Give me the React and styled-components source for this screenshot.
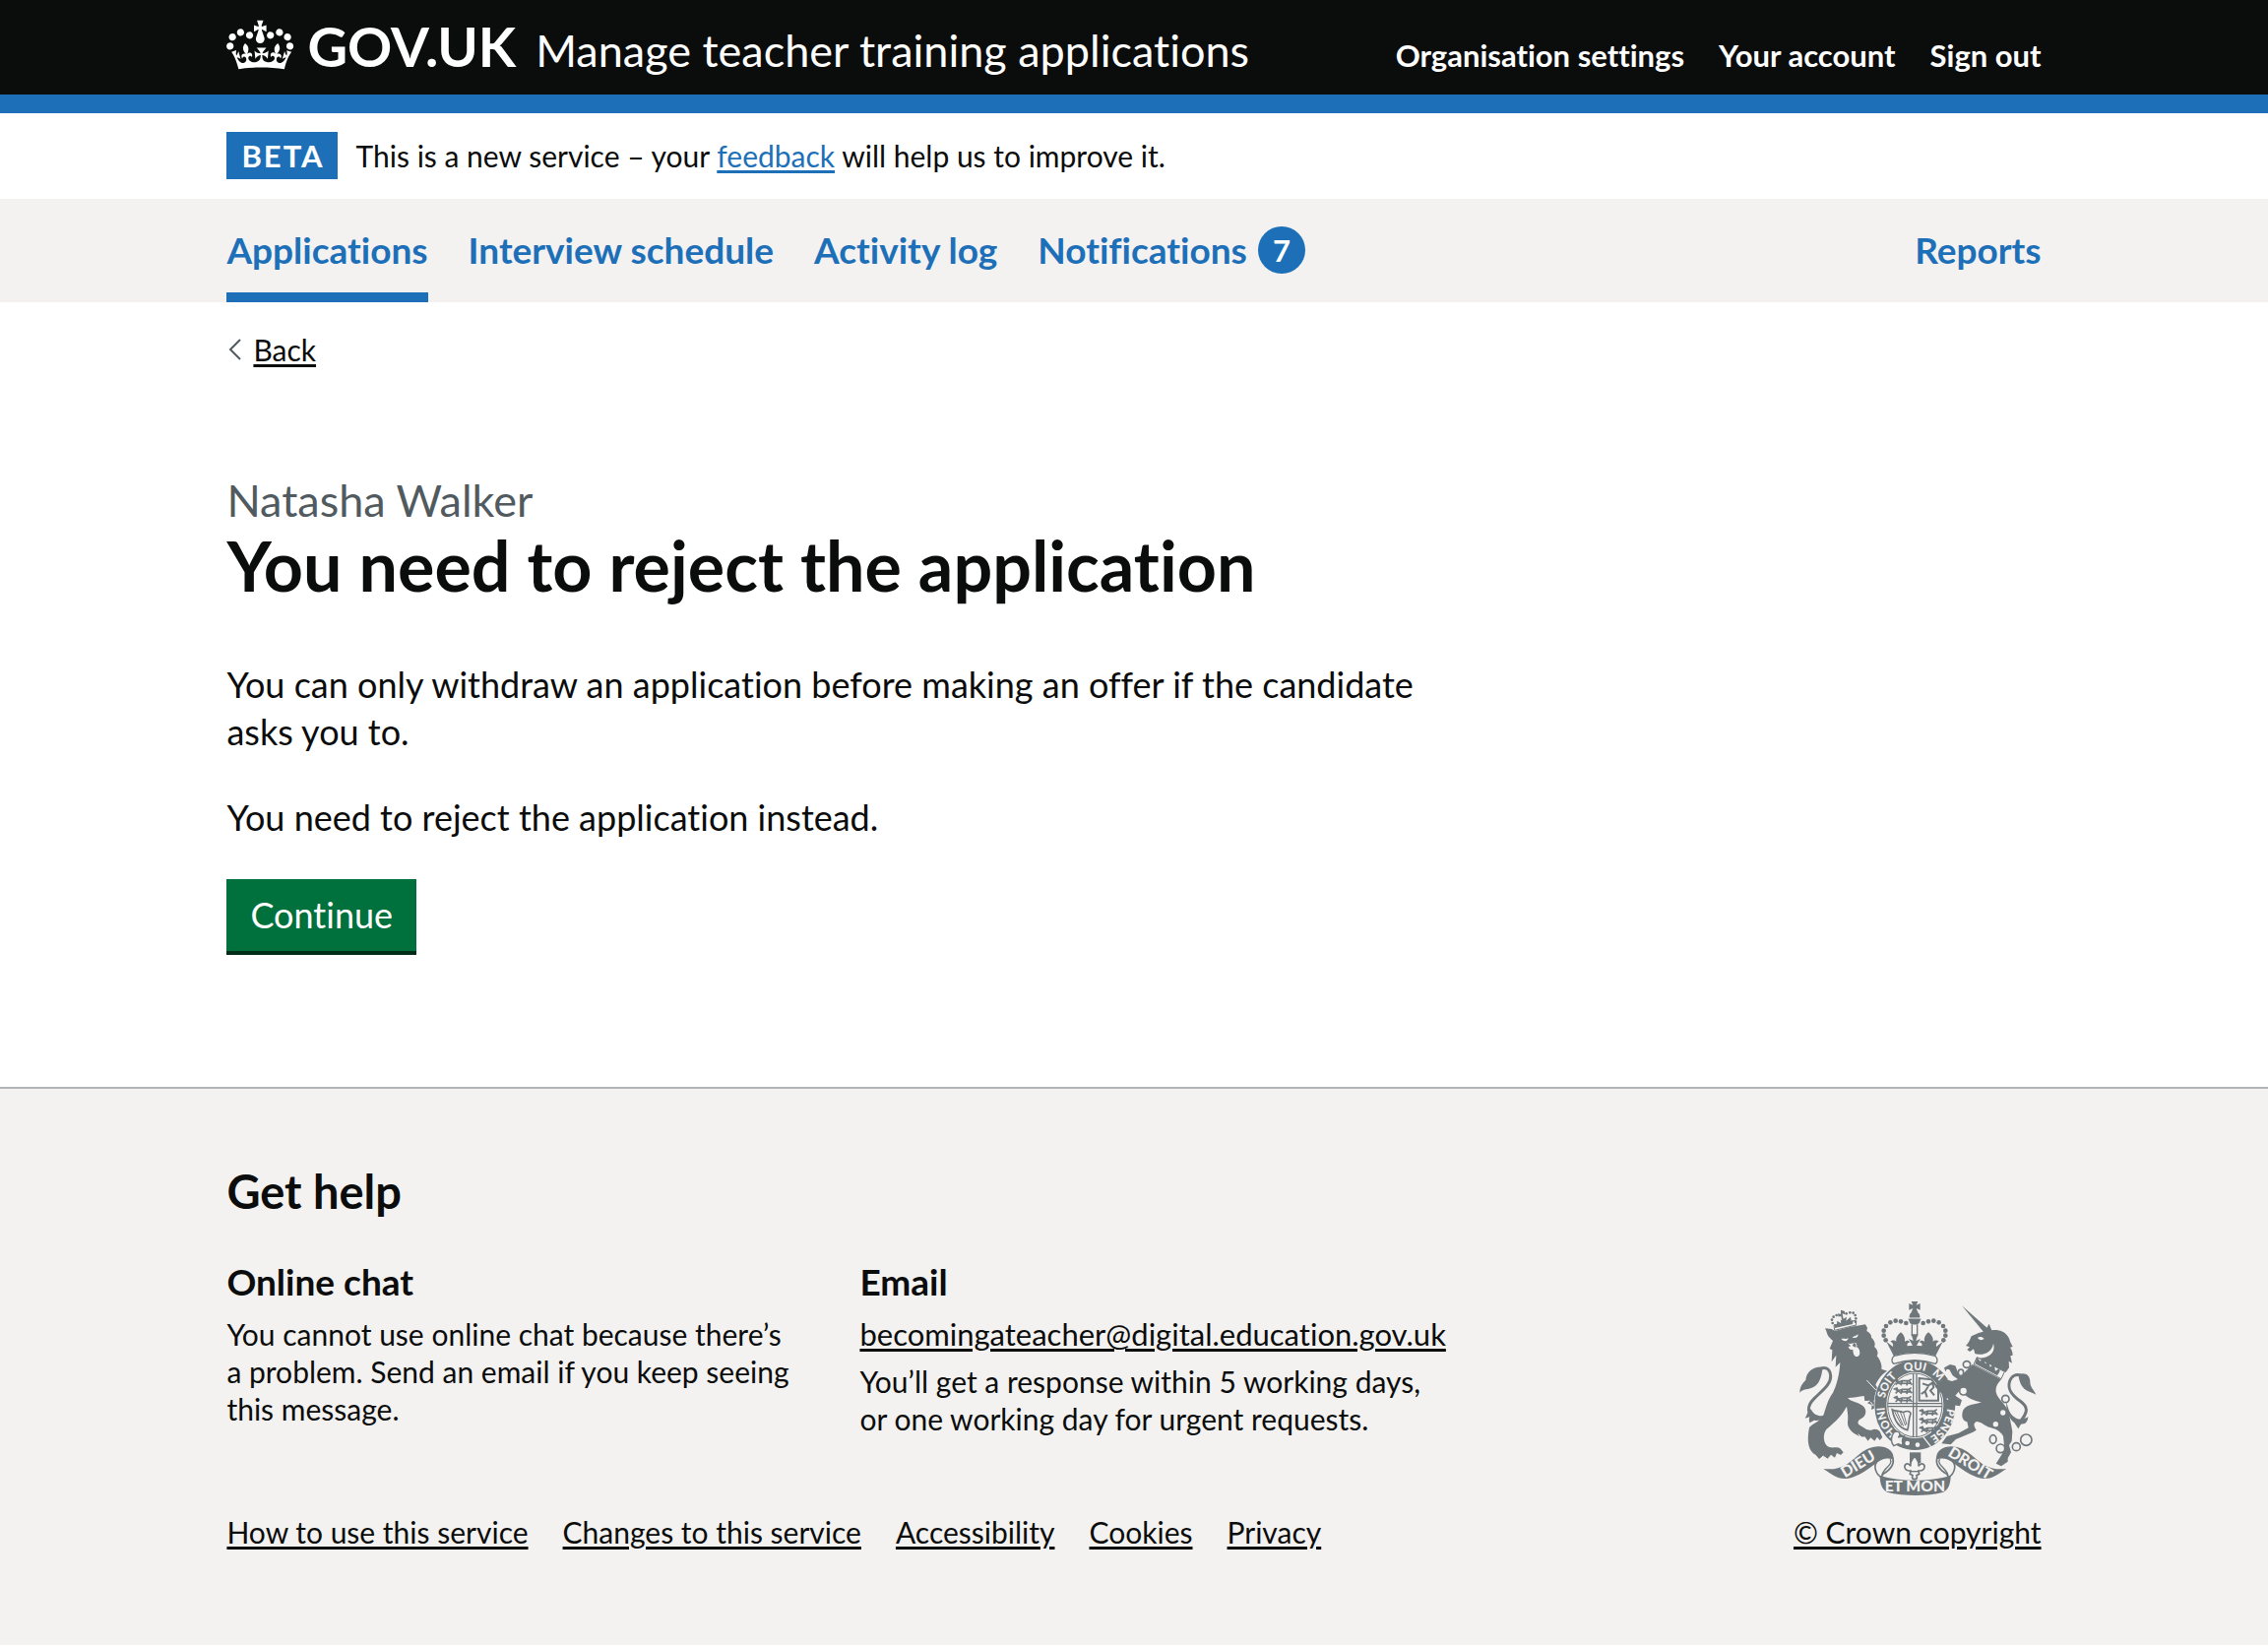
import React from "react";
import styled, { createGlobalStyle } from "styled-components";

const color = {
  black: "#0b0c0c",
  blue: "#1d70b8",
  grey: "#f3f2f1",
  midGrey: "#b1b4b6",
  darkGrey: "#505a5f",
  arms: "#6f777b",
  green: "#00703c",
  greenShadow: "#002d18",
};

const GlobalStyle = createGlobalStyle`
  *, *::before, *::after { box-sizing: border-box; }
  body {
    margin: 0;
    background: #fff;
    color: ${color.black};
    font-family: Lato, "Liberation Sans", sans-serif;
    font-size: 30px;
    line-height: 38px;
    font-variant-ligatures: none;
  }
  h1, h2, h3, p, ul { margin: 0; padding: 0; }
  ul { list-style: none; }
`;

const Container = styled.div`
  width: 80%;
  margin: 0 auto;
`;

const Link = styled.a`
  color: ${(p) => (p.$blue ? color.blue : color.black)};
  text-decoration: underline;
  text-decoration-thickness: 3px;
  text-underline-offset: 3px;
`;

/* Header */

const Header = styled.header`
  background: ${color.black};
  color: #fff;
  border-bottom: 19px solid ${color.blue};
`;

const HeaderRow = styled(Container)`
  display: flex;
  align-items: baseline;
  min-height: 96px;
  padding-top: 13px;
`;

const Logo = styled.a`
  display: flex;
  align-items: baseline;
  gap: 13px;
  margin-right: 20px;
  color: inherit;
  font-size: 56px;
  font-weight: 700;
  line-height: 68px;
  text-decoration: none;

  svg { align-self: flex-start; }
`;

const ServiceName = styled.a`
  flex: 1;
  color: inherit;
  font-size: 45px;
  text-decoration: none;
`;

const AccountList = styled.ul`
  display: flex;
  gap: 35px;
`;

const AccountLink = styled.a`
  color: inherit;
  font-size: 31px;
  font-weight: 700;
  text-decoration: none;
`;

/* Phase banner */

const PhaseBanner = styled(Container)`
  display: flex;
  align-items: center;
  gap: 19px;
  padding: 19px 0 20px;
`;

const PhaseTag = styled.strong`
  padding: 0 13px 0 15px;
  background: ${color.blue};
  color: #fff;
  font-size: 31px;
  letter-spacing: 2px;
  line-height: 48px;
`;

/* Primary navigation */

const PrimaryNav = styled.nav`
  background: ${color.grey};
`;

const NavRow = styled(Container)`
  display: flex;
  justify-content: space-between;
`;

const NavList = styled.ul`
  display: flex;
  gap: 41px;
`;

const NavLink = styled.a`
  display: flex;
  align-items: center;
  gap: 11px;
  padding: 28px 0 19px;
  border-bottom: 10px solid ${(p) => (p.$current ? color.blue : "transparent")};
  color: ${color.blue};
  font-size: 37px;
  font-weight: 700;
  line-height: 48px;
  text-decoration: none;
`;

const Count = styled.span`
  width: 48px;
  border-radius: 50%;
  background: ${color.blue};
  color: #fff;
  font-size: 31px;
  text-align: center;
`;

/* Main */

const Main = styled.main`
  padding: 28px 0 138px;
`;

const BackLink = styled.a`
  display: inline-flex;
  align-items: center;
  gap: 11px;
  color: ${color.black};
  text-decoration: none;
`;

const BackText = styled.span`
  text-decoration: underline;
  text-decoration-thickness: 3px;
  text-underline-offset: 3px;
`;

const Title = styled.h1`
  margin-top: 108px;
  font-size: 70px;
  font-weight: 700;
  line-height: 78px;
`;

const Caption = styled.span`
  display: block;
  color: ${color.darkGrey};
  font-size: 45px;
  font-weight: 400;
  line-height: 53px;
`;

const Copy = styled.div`
  display: flex;
  flex-direction: column;
  align-items: flex-start;
  gap: 39px;
  max-width: 1216px;
  margin-top: 58px;
  font-size: 36px;
  line-height: 48px;
`;

const Button = styled.button`
  padding: 0 24px;
  border: 0;
  background: ${color.green};
  box-shadow: 0 4px 0 ${color.greenShadow};
  color: #fff;
  font: inherit;
  line-height: 73px;
  cursor: pointer;
`;

/* Footer */

const Footer = styled.footer`
  border-top: 2px solid ${color.midGrey};
  background: ${color.grey};
`;

const FooterRow = styled(Container)`
  display: flex;
  align-items: flex-end;
  justify-content: space-between;
  padding: 76px 0 96px;
`;

const FooterHeading = styled.h2`
  margin-bottom: 40px;
  font-size: 47px;
  line-height: 56px;
`;

const HelpColumns = styled.div`
  display: grid;
  grid-template-columns: repeat(2, minmax(0, 604px));
  gap: 39px;
`;

const HelpHeading = styled.h3`
  margin-bottom: 10px;
  font-size: 37px;
  line-height: 48px;
`;

const HelpText = styled.p`
  max-width: 576px;
`;

const EmailText = styled.p`
  margin-bottom: 10px;
  font-size: 31px;
`;

const FooterLinks = styled.ul`
  display: flex;
  flex-wrap: wrap;
  gap: 35px;
  margin-top: 77px;
`;

const Copyright = styled.div`
  display: flex;
  flex-direction: column;
  align-items: center;
  gap: 18px;
`;

const ArmsLetters = styled.text`
  fill: ${color.grey};
  font-size: ${(p) => p.$size || 47}px;
  font-weight: 900;
  text-anchor: middle;
`;

const CROWN_PATH =
  "M6.7 12.2c1 .4 2.1-.1 2.5-1s-.1-2.1-1-2.5c-1-.4-2.1.1-2.5 1-.4 1 0 2.1 1 2.5m-4.3 2.5c1 .4 2.1-.1 2.5-1s-.1-2.1-1-2.5c-1-.4-2.1.1-2.5 1-.5 1 0 2.1 1 2.5m-1.3 4.8c1 .4 2.1-.1 2.5-1 .4-1-.1-2.1-1-2.5-1-.4-2.1.1-2.5 1-.4 1 0 2.1 1 2.5m10.4-5.8c1 .4 2.1-.1 2.5-1s-.1-2.1-1-2.5c-1-.4-2.1.1-2.5 1s0 2.1 1 2.5m17.4-1.5c-1 .4-2.1-.1-2.5-1s.1-2.1 1-2.5c1-.4 2.1.1 2.5 1 .5 1 0 2.1-1 2.5m4.3 2.5c-1 .4-2.1-.1-2.5-1s.1-2.1 1-2.5c1-.4 2.1.1 2.5 1 .5 1 0 2.1-1 2.5m1.3 4.8c-1 .4-2.1-.1-2.5-1-.4-1 .1-2.1 1-2.5 1-.4 2.1.1 2.5 1 .4 1 0 2.1-1 2.5m-10.4-5.8c-1 .4-2.1-.1-2.5-1s.1-2.1 1-2.5c1-.4 2.1.1 2.5 1s0 2.1-1 2.5m-5.3-4.9 2.4 1.3V6.5l-2.4.8c-.1-.1-.1-.2-.2-.2s1-3 1-3h-3.4l1 3c-.1.1-.2.1-.2.2-.1.1-2.4-.7-2.4-.7v3.5L17 8.8c-.1.1 0 .2.1.3l-1.4 4.2c-.1.2-.1.4-.1.7 0 1.1.8 2.1 1.9 2.2h.8c1.1-.2 1.9-1.1 1.9-2.2 0-.2 0-.4-.1-.7l-1.4-4.2c.2-.1.3-.2.3-.3m-1 20.3c4.6 0 8.9.3 12.8.9 1.1-4.6 2.4-7.2 3.8-9.1l-2.6-.9c.3 1.3.3 1.9 0 2.8-.4-.4-.8-1.2-1.1-2.4l-1.2 4.2c.8-.5 1.4-.9 2-.9-1.2 2.6-2.7 3.2-3.6 3-1.2-.2-1.7-1.3-1.5-2.2.3-1.3 1.6-1.6 2.2-.1 1.2-2.4-.8-3.1-2.1-2.4 1.9-1.9 2.2-3.6.6-5.7-2.2 1.7-2.2 3.3-1.2 5.6-1.3-1.5-3.3-.7-2.5 1.7.9-1.4 2.1-.5 2 .8-.2 1.2-1.7 2.1-3.7 1.9-2.8-.2-2.9-2.2-2.9-3.7.7-.1 1.9.5 2.9 1.9l.4-4.3c-1.1 1.1-2.1 1.4-3.2 1.4.4-1.2 2.1-3 2.1-3h-5.2s1.7 1.7 2.1 3c-1.1 0-2.1-.2-3.2-1.4l.4 4.3c1-1.4 2.2-2 2.9-1.9-.1 1.5-.2 3.4-2.9 3.7-1.9.2-3.5-.7-3.7-1.9-.2-1.3 1-2.2 1.9-.8.7-2.3-1.2-3.1-2.5-1.7 1-2.3 1-3.9-1.1-5.6-1.7 2-1.4 3.7.5 5.7-1.3-.7-3.3 0-2.1 2.4.6-1.5 1.9-1.2 2.2.1.2.9-.4 2-1.5 2.2-.9.2-2.4-.4-3.5-3 .6 0 1.2.4 2 .9l-1.2-4.2c-.3 1.1-.7 2-1.1 2.4-.3-.9-.2-1.5 0-2.8l-2.6.9c1.4 1.9 2.6 4.5 3.8 9.1 3.9-.6 8.2-.9 12.8-.9";

function Crown() {
  return (
    <svg width="69" height="61" viewBox="0 0 36 32" fill="currentColor" aria-hidden="true">
      <path d={CROWN_PATH} />
    </svg>
  );
}

function Lion() {
  return (
    <g transform="translate(36 54)">
      <path d="M115 98l10 6 45-12 48-8 6 10-2 10c10 6 16 14 14 20 10 8 14 20 9 28 10 8 14 20 8 28 12 14 16 30 14 40l18 6c-16 8-28 24-36 42 10 16 24 28 32 48l10 26-12-2-3 14-14-12-6 12-8-15-12 5 2-14-14-6 10-8-18 1-2-15c-16 2-32 6-50 6 8 12 36 12 50 28 10 14 4 30-10 36-10 6-12 14-2 20 12 6 20 16 34 14 10-4 18-4 26 4l8 18-8 9-8-10-8 12-12-10-8 10-10-13c-22 2-54-20-52-44 2-20 0-28-3-48-18 34-44 54-62 70-10 14-10 34 0 48 14 14 28 2 42 10l10 12-8 8-12-6-6 14-12-9-10 12-12-8-14 9-10-12c-24-12-28-44-20-84 12-14 34-18 44-40 8-24 12-44 28-66 12-24 20-56 22-92l-14 14 2-36-14 20 2-36-8-4 10-24-10-10c-8-6-8-18-14-28z" />
      <path fill={color.grey} d="M144 128c8-2 14 2 22-2-2 10-12 12-22 2zm34-4c6-6 12-4 18-10 0 8-6 14-18 10zm-15 16c8 6 16 0 26 0l4 10-8 2c10-1 16 8 16 18 0 8-4 12-9 12-8 0-12-10-12-22-6 4-12-2-14-8l8-2z" />
      <path fill={color.arms} d="M178 148l6-8 6 6-4 8z" />
      <path fill="none" stroke={color.arms} strokeWidth="9" d="M72 368c-34-6-34-34-10-58 26-26 52-44 50-70-2-24-22-30-36-16" />
      <path d="M88 214c-30-2-50 16-52 40-10 10-18 20-18 38 14-14 26-8 40-16 20-10 26-30 30-62zM52 342c-12 8-12 20-18 28l14-4c-2 8-2 12 0 18l14-8c14 4 26-2 36-16-16 6-36 4-46-18z" />
      <path fill={color.grey} stroke={color.arms} strokeWidth="3" d="M122 86l66-14 2 14-66 16z" />
      <g>
        {[[118, 80], [116, 70], [121, 61], [130, 56], [140, 56], [160, 51], [171, 48], [181, 49], [187, 56], [189, 66], [188, 76]].map(([x, y]) => (
          <circle key={x + "-" + y} cx={x} cy={y} r="4" />
        ))}
      </g>
      <path d="M143 40l12 4 1 10-8-3 3 16 10-6-2 12 14-12 2 12 6-2-2 12-54 12-2-12 8 2 1-12 12 8-2-12 5 4-4-16-7 4-2-10 9 2z" />
      <path stroke={color.grey} strokeWidth="3" fill="none" d="M222 254l28 30M268 330l-8-20M254 336l-10-20M242 332l-8-12M196 418l10 10M90 484l-12 12" />
    </g>
  );
}

function Unicorn() {
  return (
    <g transform="translate(486 54)">
      <path d="M62 27l80 70-14 10z" />
      <path d="M136 98l9-16 8 20c30-4 50 10 56 34l8 16-8 2c6 8 8 16 8 24l-7 2 5 22-10-6 1 20-10 14-86-40c0-8-2-14-8-17l-4-14-12 8-8-6 8-8-12-4c8-8 12-16 17-29l22-10 14-4z" />
      <path fill={color.grey} d="M110 124c8-3 14-2 20 4-8 6-16 4-20-4zm-10 50c34 6 54-8 58-32 8 24-10 46-46 44z" />
      <path fill={color.grey} stroke={color.arms} strokeWidth="3" d="M108 184l84 44-10 22-84-44z" />
      <path d="M102 204l6-20 10 12 8-10 8 18 10-10 4 20 12-10 4 22 12-8 2 8-8 14z" />
      <path d="M94 206l88 46c-12 12-18 24-16 38 4 24 34 36 40 68l10 52-2 30-8 12 6 22-10 18v10l-20 14-16-8 18-28 8-18-4-38c-14-20-26-22-40-26-16-4-24-16-40-18-12 4-10 14-2 26l-10 6-52 22-16 16-28-3 16-22 36-10 30-16-4-18c-16-4-18-20-12-36 14-20 38-16 56-24-24-4-44-14-56-28l-14-4-10 12 20 14-6 18-24-4-18-26-20-14-14-16 12-14 18-8 22 6 18-6z" />
      <path d="M8 216l18-10 16 4 8 20 14 8 14-4-6 24-18-4-20-14-10-18-8-2-4 8z" />
      <path fill="none" stroke={color.arms} strokeWidth="9" d="M236 384c32-34 26-50 4-66-28-20-40-38-32-62 6-16 20-22 34-16" />
      <path d="M234 236c22-8 36 4 36 22 0 18 8 20 18 40-12-8-24-8-36-18-12-12-16-28-18-44zM198 320c6 24 10 40 30 50 12 6 24 2 36-4-2 10-2 14-10 20l-12 2-8 14-12-18c-20-16-26-40-24-64z" />
      <g fill={color.grey} stroke={color.arms} strokeWidth="5">
        <ellipse cx="77" cy="206" rx="11" ry="10" />
        <ellipse cx="59" cy="231" rx="8" ry="10" />
        <circle cx="67" cy="287" r="12" />
        <circle cx="195" cy="311" r="11" />
        <ellipse cx="157" cy="434" rx="10" ry="13" />
        <circle cx="180" cy="462" r="13" />
        <circle cx="228" cy="457" r="12" />
        <circle cx="258" cy="436" r="17" />
      </g>
      <g fill={color.grey}>
        <circle cx="187" cy="353" r="8" />
        <circle cx="165" cy="388" r="8" />
      </g>
    </g>
  );
}

function StateCrown() {
  const dots = [[26, 80], [42, 75], [58, 73], [74, 78], [87, 89], [94, 103], [94, 118], [88, 132]];
  return (
    <g transform="translate(404 54)">
      <path d="M-10 14h20l-5 11 12-5v20l-12-5 5 12h-20l5-12-12 5V20l12 5z" />
      <circle cy="60" r="16" />
      <path d="M-20 66h40l-6 14c-8 6-20 6-28 0z" />
      <path stroke={color.grey} strokeWidth="3" d="M-20 65h40" />
      <path fill="none" stroke={color.arms} strokeWidth="4" d="M-8 84v36M8 84v36" />
      {dots.map(([x, y]) => (
        <g key={x + "-" + y}>
          <circle cx={x} cy={y} r="7" />
          <circle cx={-x} cy={y} r="7" />
        </g>
      ))}
      <path d="M-86 136l20 16c2-10-2-14-8-16 6-6 14-4 18 0-2-10 4-20 14-28 10 8 14 18 12 28 6-4 12-4 16 2-8 2-10 6-8 12l16-2-12-20 14 6-6-20h20l-6 20 14-6-12 20 16 2c2-6 0-10-8-12 4-6 10-6 16-2-2-10 2-20 12-28 10 8 16 18 14 28 4-4 12-6 18 0-6 2-10 6-8 16l20-16-22 44C22 168-22 168-64 180z" />
      <path fill={color.grey} stroke={color.arms} strokeWidth="4" d="M-62 180c42-12 82-12 124 0 8 6 10 16 2 24-42-14-86-14-128 0-8-8-6-18 2-24z" />
    </g>
  );
}

function QuarterLions({ x, y }) {
  return (
    <g transform={`translate(${x} ${y})`}>
      {[0, 26, 52].map((dy) => (
        <path
          key={dy}
          transform={`translate(0 ${dy})`}
          fill="none"
          stroke={color.arms}
          strokeWidth="5"
          d="M2 6l10-4 4 8 12-4h20l8-5M16 10l-8 8M28 8l-4 12M44 8l-2 12M50 8l8 10M8 6l12 8 34-1"
        />
      ))}
    </g>
  );
}

const garterWords = [
  ["HONI", "13%"],
  ["SOIT", "32%"],
  ["QUI", "49%"],
  ["MAL Y", "67%"],
  ["PENSE", "88%"],
];

function Garter() {
  return (
    <g>
      <ellipse cx="405" cy="384" rx="125" ry="139" fill={color.grey} />
      <ellipse cx="405" cy="384" rx="105" ry="119" fill="none" stroke={color.arms} strokeWidth="36" />
      <ellipse cx="405" cy="384" rx="83" ry="97" fill={color.grey} stroke={color.arms} strokeWidth="3" />
      <path fill="none" stroke={color.arms} strokeWidth="4" d="M400 288v192M410 288v192M322 379h166M322 388h166" />
      <QuarterLions x={338} y={304} />
      <QuarterLions x={416} y={396} />
      <path fill="none" stroke={color.arms} strokeWidth="6" d="M418 302l38 4 20 28v36h-58zM428 318l18 6 12-8 4 14-10 10 12 14M446 326l-10 16 6 18M436 342l-12 8" />
      <path fill="none" stroke={color.arms} strokeWidth="5" d="M336 398c10 6 22 2 34 8 14-8 22 0 22 4-8 18-4 34-10 50-24-6-40-30-46-62z" />
      <path stroke={color.arms} strokeWidth="3" d="M350 404l20 44M360 404l16 42M370 408l10 36M343 404l22 42" />
      <path id="garter-line" fill="none" d="M375 485A94 107 0 0 1 405 277A94 107 0 0 1 435 487" />
      {garterWords.map(([word, offset]) => (
        <ArmsLetters key={word} $size={34}>
          <textPath href="#garter-line" startOffset={offset}>{word}</textPath>
        </ArmsLetters>
      ))}
      <path fill={color.grey} stroke={color.arms} strokeWidth="4" d="M342 466c16-6 22 8 12 16l18-4c-8 10-8 18-2 30l-16-6-14 6c-10-12-8-30 2-42z" />
      <circle cx="382" cy="500" r="7" fill={color.grey} />
      <circle cx="413" cy="505" r="7" fill={color.grey} />
      <path fill="none" stroke={color.grey} strokeWidth="4" d="M430 480l26 34" />
    </g>
  );
}

function RibbonEnd() {
  return (
    <g>
      <path d="M126 578c52 6 74-14 104-40 24-22 54-34 82-26 22 8 28 20 28 36-20-4-36 0-52 12-36 28-66 46-92 48-28 2-44-14-70-30z" />
      <path
        fill={color.grey}
        stroke={color.arms}
        strokeWidth="5"
        d="M338 546c4 18-6 34-30 48l-6 10c-18-12-24-36-12-48 14-12 32-14 48-10z"
      />
      <path fill="none" stroke={color.arms} strokeWidth="4" d="M330 548c8 22-20 24-26 50" />
    </g>
  );
}

function Motto() {
  return (
    <g>
      <RibbonEnd />
      <g transform="translate(810 0) scale(-1 1)">
        <RibbonEnd />
      </g>
      <path d="M298 598c60 20 154 20 216 0 0 24-6 42-22 51-50 13-120 13-172 0-16-9-22-27-22-51z" />
      <path d="M389 528h34v32h-34z" />
      <path
        fill={color.grey}
        stroke={color.arms}
        strokeWidth="5"
        d="M404 540c10 10 14 18 12 30 8-14 20-6 18 4-2 8-8 10-14 10h-4l2 10-8 4c4 10-2 12-6 12s-10-2-6-12l-8-4 2-10h-4c-6 0-12-2-14-10-2-10 10-18 18-4-2-12 2-20 12-30z"
      />
      <path stroke={color.arms} strokeWidth="4" d="M392 586h24" />
      <ArmsLetters transform="translate(240 577) rotate(-31)">DIEU</ArmsLetters>
      <ArmsLetters x="405" y="648">ET MON</ArmsLetters>
      <ArmsLetters transform="translate(566 575) rotate(31)">DROIT</ArmsLetters>
    </g>
  );
}

function RoyalArms() {
  return (
    <svg width="242" height="198" viewBox="50 65 726 594" fill={color.arms} aria-hidden="true">
      <Lion />
      <Garter />
      <Unicorn />
      <StateCrown />
      <Motto />
    </svg>
  );
}

function BackChevron() {
  return (
    <svg width="16" height="22" viewBox="0 0 16 22" fill="none" stroke={color.darkGrey} strokeWidth="2" aria-hidden="true">
      <path d="M14 1L4 11l10 10" />
    </svg>
  );
}

const accountLinks = ["Organisation settings", "Your account", "Sign out"];
const navLinks = [
  { label: "Applications", current: true },
  { label: "Interview schedule" },
  { label: "Activity log" },
  { label: "Notifications", count: 7 },
];
const footerLinks = ["How to use this service", "Changes to this service", "Accessibility", "Cookies", "Privacy"];

export default function App() {
  return (
    <>
      <GlobalStyle />
      <Header>
        <HeaderRow>
          <Logo href="#">
            <Crown />
            GOV.UK
          </Logo>
          <ServiceName href="#">Manage teacher training applications</ServiceName>
          <AccountList>
            {accountLinks.map((label) => (
              <li key={label}>
                <AccountLink href="#">{label}</AccountLink>
              </li>
            ))}
          </AccountList>
        </HeaderRow>
      </Header>

      <PhaseBanner>
        <PhaseTag>BETA</PhaseTag>
        <span>
          This is a new service – your <Link $blue href="#">feedback</Link> will help us to improve it.
        </span>
      </PhaseBanner>

      <PrimaryNav aria-label="Primary">
        <NavRow>
          <NavList>
            {navLinks.map(({ label, current, count }) => (
              <li key={label}>
                <NavLink href="#" $current={current} aria-current={current ? "page" : undefined}>
                  {label}
                  {count && <Count>{count}</Count>}
                </NavLink>
              </li>
            ))}
          </NavList>
          <NavLink href="#">Reports</NavLink>
        </NavRow>
      </PrimaryNav>

      <Container>
        <Main>
          <BackLink href="#">
            <BackChevron />
            <BackText>Back</BackText>
          </BackLink>
          <Title>
            <Caption>Natasha Walker</Caption>
            You need to reject the application
          </Title>
          <Copy>
            <p>You can only withdraw an application before making an offer if the candidate asks you to.</p>
            <p>You need to reject the application instead.</p>
            <Button type="submit">Continue</Button>
          </Copy>
        </Main>
      </Container>

      <Footer>
        <FooterRow>
          <div>
            <FooterHeading>Get help</FooterHeading>
            <HelpColumns>
              <section>
                <HelpHeading>Online chat</HelpHeading>
                <HelpText>
                  You cannot use online chat because there’s a problem. Send an email if you keep seeing this message.
                </HelpText>
              </section>
              <section>
                <HelpHeading>Email</HelpHeading>
                <EmailText>
                  <Link href="mailto:becomingateacher@digital.education.gov.uk">
                    becomingateacher@digital.education.gov.uk
                  </Link>
                </EmailText>
                <HelpText>You’ll get a response within 5 working days, or one working day for urgent requests.</HelpText>
              </section>
            </HelpColumns>
            <FooterLinks>
              {footerLinks.map((label) => (
                <li key={label}>
                  <Link href="#">{label}</Link>
                </li>
              ))}
            </FooterLinks>
          </div>
          <Copyright>
            <RoyalArms />
            <Link href="#">© Crown copyright</Link>
          </Copyright>
        </FooterRow>
      </Footer>
    </>
  );
}
